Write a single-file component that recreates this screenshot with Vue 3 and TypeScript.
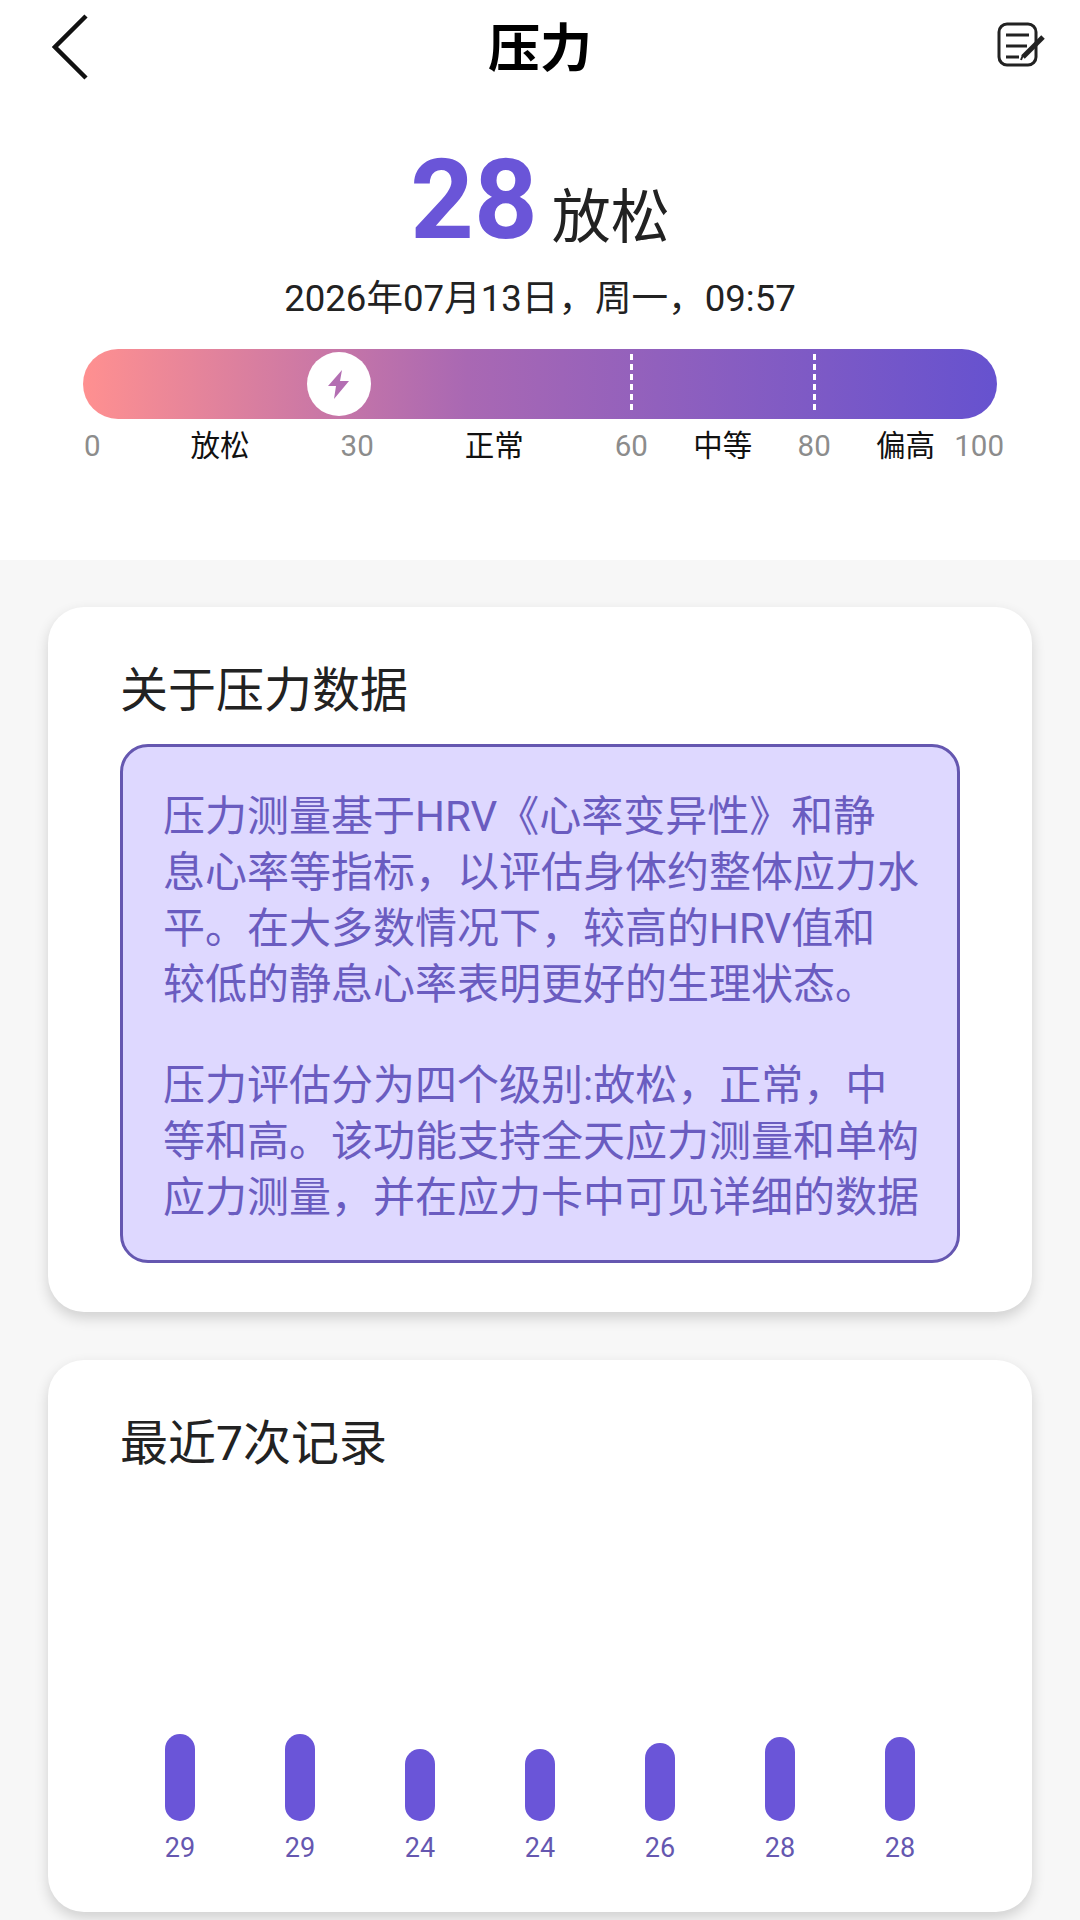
<script setup lang="ts">
const score = 28;

const segments = [
  { label: "放松", width: 30, end: 30 },
  { label: "正常", width: 30, end: 60 },
  { label: "中等", width: 20, end: 80 },
  { label: "偏高", width: 20, end: 100 },
];

const dividers = [60, 80];

const paragraphs = [
  [
    "压力测量基于HRV《心率变异性》和静",
    "息心率等指标，以评估身体约整体应力水",
    "平。在大多数情况下，较高的HRV值和",
    "较低的静息心率表明更好的生理状态。",
  ],
  [
    "压力评估分为四个级别:故松，正常，中",
    "等和高。该功能支持全天应力测量和单构",
    "应力测量，并在应力卡中可见详细的数据",
  ],
];

const records = [29, 29, 24, 24, 26, 28, 28];
</script>

<template>
  <div class="page">
    <section class="top">
      <header class="nav">
        <button class="nav-btn back" aria-label="返回">
          <svg width="36" height="66" viewBox="0 0 36 66" fill="none">
            <path d="M34 2 L3 33 L34 64" stroke="#111" stroke-width="4.5" stroke-linejoin="miter" />
          </svg>
        </button>
        <h1 class="nav-title">压力</h1>
        <button class="nav-btn edit" aria-label="编辑">
          <svg width="50" height="46" viewBox="0 0 50 46" fill="none">
            <rect x="2" y="2" width="37" height="41" rx="8" stroke="#222" stroke-width="3" />
            <path d="M9 13 H32 M9 24 H30 M9 35 H22" stroke="#222" stroke-width="3" />
            <path d="M26 35 L46 15" stroke="#222" stroke-width="5" />
            <path d="M24 38 L26 33" stroke="#222" stroke-width="2" />
          </svg>
        </button>
      </header>

      <div class="score">
        <span class="score-num">{{ score }}</span>
        <span class="score-text">放松</span>
      </div>
      <p class="date">2026年07月13日，周一，09:57</p>

      <div class="gauge">
        <div class="bar">
          <i v-for="d in dividers" :key="d" class="divider" :style="{ left: d + '%' }"></i>
          <span class="thumb" :style="{ left: score + '%' }">
            <svg width="23" height="31" viewBox="0 0 23 31">
              <path d="M15 1 L1 17 H9 L7 30 L22 12 H13 Z" fill="#b36eb2" />
            </svg>
          </span>
        </div>
        <div class="scale">
          <span class="tick-start">0</span>
          <div v-for="s in segments" :key="s.label" class="seg" :style="{ width: s.width + '%' }">
            <span class="seg-label">{{ s.label }}</span>
            <span class="tick" :class="{ last: s.end === 100 }">{{ s.end }}</span>
          </div>
        </div>
      </div>
    </section>

    <section class="card about">
      <h2 class="card-title">关于压力数据</h2>
      <div class="note">
        <p v-for="(lines, i) in paragraphs" :key="i" class="note-par">
          <span v-for="line in lines" :key="line" class="note-line">{{ line }}</span>
        </p>
      </div>
    </section>

    <section class="card history">
      <h2 class="card-title">最近7次记录</h2>
      <div class="chart">
        <div v-for="(r, i) in records" :key="i" class="col">
          <div class="pill" :style="{ height: r * 3 + 'px' }"></div>
          <span class="col-value">{{ r }}</span>
        </div>
      </div>
    </section>
  </div>
</template>

<style>
body {
  background: #f7f7f7;
}
</style>

<style scoped>
.page {
  height: 1920px;
  overflow: hidden;
  background: #f7f7f7;
  font-family: Roboto, "Noto Sans CJK SC", sans-serif;
  color: #111;
}

.top {
  height: 560px;
  box-sizing: border-box;
  background: #fff;
  padding-top: 14px;
}

.nav {
  display: flex;
  align-items: flex-start;
  justify-content: space-between;
  height: 132px;
  padding: 0 33px 0 52px;
  position: relative;
}

.nav-btn {
  border: 0;
  background: none;
  padding: 0;
  display: block;
}

.edit {
  margin-top: 8px;
}

.nav-title {
  margin: 0;
  position: absolute;
  left: 0;
  right: 0;
  top: 3px;
  text-align: center;
  font-size: 52px;
  line-height: 66px;
  font-weight: 700;
  color: #000;
}

.score {
  display: flex;
  justify-content: center;
  align-items: baseline;
  gap: 14px;
  height: 108px;
  line-height: 108px;
}

.score-num {
  font-size: 111px;
  font-weight: 700;
  color: #6a55d8;
}

.score-text {
  font-size: 59px;
  color: #222;
}

.date {
  margin: 21px 0 0;
  text-align: center;
  font-size: 36.6px;
  line-height: 48px;
  color: #222;
}

.gauge {
  margin: 26px 83px 0;
}

.bar {
  position: relative;
  height: 70px;
  border-radius: 35px;
  background: linear-gradient(90deg, #ff9090 0%, #a968b3 42%, #6652cf 100%);
}

.divider {
  position: absolute;
  top: 5px;
  bottom: 8px;
  width: 3px;
  margin-left: -1px;
  background: repeating-linear-gradient(180deg, #fff 0 6px, transparent 6px 10px);
}

.thumb {
  position: absolute;
  top: 3px;
  width: 64px;
  height: 64px;
  margin-left: -32px;
  border-radius: 50%;
  background: #fff;
  display: flex;
  align-items: center;
  justify-content: center;
}

.scale {
  display: flex;
  position: relative;
  margin-top: 7px;
  height: 40px;
  line-height: 40px;
  font-size: 29.5px;
}

.tick-start {
  position: absolute;
  left: 1px;
  color: #8c8c8c;
}

.seg {
  position: relative;
  text-align: center;
}

.seg-label {
  color: #111;
}

.tick {
  position: absolute;
  right: 0;
  transform: translateX(50%);
  color: #8c8c8c;
}

.tick.last {
  transform: none;
  right: -7px;
}

.card {
  box-sizing: border-box;
  margin: 0 48px;
  background: #fff;
  border-radius: 36px;
  box-shadow: 0 6px 14px rgba(0, 0, 0, 0.16);
  padding: 0 72px;
}

.about {
  margin-top: 47px;
  height: 705px;
  padding-top: 52px;
}

.history {
  margin-top: 48px;
  height: 552px;
  padding-top: 52px;
  position: relative;
}

.card-title {
  margin: 0;
  font-size: 48px;
  line-height: 64px;
  font-weight: 400;
  color: #222;
}

.note {
  box-sizing: border-box;
  margin-top: 21px;
  height: 519px;
  padding: 42px 40px 0;
  background: #ded8ff;
  border: 3px solid #6557b0;
  border-radius: 28px;
  font-size: 42px;
  line-height: 56px;
  color: #6a5cc0;
}

.note-par {
  margin: 0 0 45px;
}

.note-line {
  display: block;
  white-space: nowrap;
}

.chart {
  display: flex;
  align-items: flex-end;
  justify-content: space-between;
  height: 389px;
  padding-left: 30px;
  width: 810px;
  box-sizing: border-box;
}

.col {
  width: 60px;
  display: flex;
  flex-direction: column;
  align-items: center;
  gap: 10px;
}

.pill {
  width: 30px;
  border-radius: 15px;
  background: #6a55d8;
}

.col-value {
  font-size: 27px;
  line-height: 34px;
  color: #6557b0;
}
</style>
